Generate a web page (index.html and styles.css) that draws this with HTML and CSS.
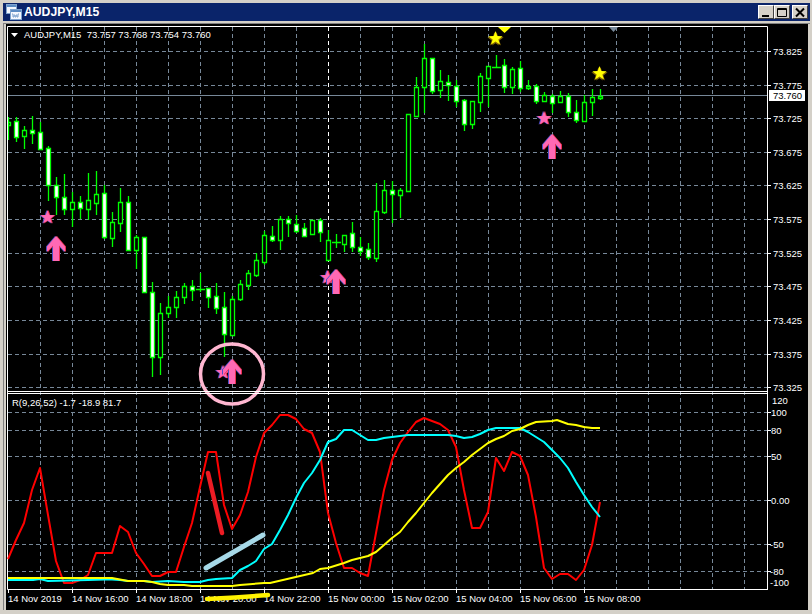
FILE: index.html
```html
<!DOCTYPE html>
<html lang="en">
<head>
<meta charset="utf-8">
<title>AUDJPY,M15</title>
<link rel="stylesheet" href="styles.css">
</head>
<body>
<div class="window">
  <header class="titlebar">
    <svg class="app-icon" width="16" height="16" viewBox="0 0 16 16">
      <rect class="win-back" x="0.5" y="0.5" width="10" height="9"/>
      <rect class="win-bar" x="1" y="1" width="9" height="2"/>
      <rect class="win-front" x="4.5" y="5.5" width="11" height="10"/>
      <rect class="win-bar" x="5" y="6" width="10" height="2"/>
      <path class="win-mark" d="M6 10h1v3h1v-2h1v2h1v-2h1v2h1v-3h1"/>
    </svg>
    <span class="title">AUDJPY,M15</span>
    <div class="buttons">
      <button class="btn" type="button" aria-label="Minimize"><svg width="14" height="11" viewBox="0 0 14 11"><rect class="glyph-fill" x="3" y="8" width="7" height="2"/></svg></button>
      <button class="btn" type="button" aria-label="Maximize"><svg width="14" height="11" viewBox="0 0 14 11"><path class="glyph-line" d="M2.5 1.5h9v8h-9zM2 2.5h10" /></svg></button>
      <button class="btn btn-close" type="button" aria-label="Close"><svg width="14" height="11" viewBox="0 0 14 11"><path class="glyph-x" d="M3 1.5l8 8M11 1.5l-8 8"/></svg></button>
    </div>
  </header>
  <main class="chart-frame">
    <svg class="chart" width="802" height="586" viewBox="6 24 802 586">
      <defs>
        <path id="star" d="M0-7.5L1.76-2.43L7.13-2.32L2.85.93L4.41 6.07L0 3L-4.41 6.07L-2.85.93L-7.13-2.32L-1.76-2.43Z"/>
        <path id="arrow" d="M0 0L9 10.5V16L3 9.5V25H-3V9.5L-9 16V10.5Z"/>
        <g id="pink-star"><use href="#star" class="edge-blue" x="-1"/><use href="#star" class="edge-red" x="1"/><use href="#star" class="pink"/></g>
        <g id="pink-arrow"><use href="#arrow" class="edge-blue" x="-1"/><use href="#arrow" class="edge-red" x="1"/><use href="#arrow" class="pink"/></g>
        <g id="gold-star"><use href="#star" class="edge-gold" x="-1" y="1"/><use href="#star" class="edge-gold" x="1" y="1"/><use href="#star" class="gold"/></g>
      </defs>

      <path class="grid" d="M8 51.5H767M8 85.5H767M8 118.5H767M8 152.5H767M8 185.5H767M8 219.5H767M8 253.5H767M8 286.5H767M8 320.5H767M8 354.5H767M8 387.5H767M8 412.5H767M8 430.5H767M8 456.5H767M8 500.5H767M8 544.5H767M8 571.5H767"/>
      <path class="grid" d="M40.5 27V589M72.5 27V589M104.5 27V589M136.5 27V589M168.5 27V589M200.5 27V589M232.5 27V589M264.5 27V589M296.5 27V589M360.5 27V589M392.5 27V589M424.5 27V589M456.5 27V589M488.5 27V589M520.5 27V589M552.5 27V589M584.5 27V589M616.5 27V589M648.5 27V589M680.5 27V589M712.5 27V589M744.5 27V589"/>
      <path class="separator" d="M328.5 27V589"/>
      <path class="bid" d="M8 95.5H767"/>

      <path class="wick" d="M8.5 117V140M16.5 117V142M24.5 126V149M32.5 116V144M40.5 122V149M48.5 146V201M56.5 177V215M64.5 174V215M72.5 192V227M80.5 196V219M88.5 173V220M96.5 171V215M104.5 185V239M112.5 212V247M120.5 188V232M128.5 196V250M136.5 235V269M152.5 282V377M160.5 303V375M168.5 296V318M176.5 291V318M184.5 283V304M192.5 280V301M200.5 273V292M208.5 288V308M216.5 283V314M224.5 292V357M232.5 296V335M240.5 280V301M248.5 270V290M256.5 253V277M264.5 231V265M272.5 226V242M280.5 216V250M288.5 216V237M296.5 215V233M304.5 223V236M320.5 218V242M328.5 230V260M336.5 234V248M344.5 235V252M352.5 222V252M360.5 237V256M368.5 243V260M376.5 183V262M384.5 180V214M392.5 181V223M400.5 188V218M416.5 77V116M424.5 44V113M432.5 58V94M440.5 70V98M448.5 75V101M456.5 80V107M464.5 99V131M472.5 101V129M480.5 73V112M488.5 66V107M496.5 55V68M504.5 59V93M512.5 67V94M520.5 61V92M528.5 80V90M536.5 84V104M544.5 92V101M552.5 94V113M560.5 91V102M568.5 93V117M576.5 100V123M584.5 95V121M592.5 89V116M600.5 89V100M196 289.5H205M332 242.5H341M492 67.5H501"/>
      <path class="body-open" d="M8.5 122.5v3h2v-3zM22.5 130.5v6h4v-6zM70.5 202.5v7h4v-7zM86.5 200.5v9h4v-9zM94.5 194.5v9h4v-9zM110.5 222.5v16h4v-16zM118.5 202.5v21h4v-21zM134.5 237.5v13h4v-13zM158.5 313.5v44h4v-44zM166.5 307.5v6h4v-6zM174.5 297.5v10h4v-10zM182.5 286.5v11h4v-11zM230.5 299.5v36h4v-36zM238.5 284.5v15h4v-15zM246.5 273.5v12h4v-12zM254.5 260.5v15h4v-15zM262.5 235.5v27h4v-27zM278.5 219.5v21h4v-21zM310.5 220.5v14h4v-14zM326.5 240.5v20h4v-20zM342.5 235.5v9h4v-9zM374.5 211.5v47h4v-47zM382.5 190.5v22h4v-22zM398.5 190.5v5h4v-5zM406.5 114.5v77h4v-77zM414.5 87.5v29h4v-29zM422.5 58.5v29h4v-29zM438.5 81.5v9h4v-9zM470.5 101.5v23h4v-23zM478.5 76.5v26h4v-26zM486.5 66.5v12h4v-12zM510.5 69.5v18h4v-18zM526.5 86.5v2h4v-2zM542.5 95.5v6h4v-6zM558.5 96.5v6h4v-6zM582.5 102.5v19h4v-19zM590.5 97.5v5h4v-5zM598.5 96.5v2h4v-2z"/>
      <path class="body-fill" d="M14.5 121.5v16h4v-16zM30.5 130.5v3h4v-3zM38.5 132.5v17h4v-17zM46.5 148.5v37h4v-37zM54.5 185.5v12h4v-12zM62.5 197.5v12h4v-12zM78.5 202.5v6h4v-6zM102.5 193.5v44h4v-44zM126.5 202.5v48h4v-48zM142.5 237.5v55h4v-55zM150.5 292.5v65h4v-65zM190.5 286.5v4h4v-4zM206.5 288.5v9h4v-9zM214.5 296.5v12h4v-12zM222.5 307.5v27h4v-27zM270.5 236.5v4h4v-4zM286.5 219.5v4h4v-4zM294.5 224.5v7h4v-7zM302.5 228.5v8h4v-8zM318.5 220.5v12h4v-12zM350.5 233.5v14h4v-14zM358.5 247.5v4h4v-4zM366.5 249.5v8h4v-8zM390.5 190.5v4h4v-4zM430.5 58.5v33h4v-33zM446.5 82.5v3h4v-3zM454.5 86.5v15h4v-15zM462.5 100.5v24h4v-24zM502.5 65.5v22h4v-22zM518.5 68.5v20h4v-20zM534.5 86.5v15h4v-15zM550.5 96.5v7h4v-7zM566.5 96.5v16h4v-16zM574.5 112.5v8h4v-8z"/>

      <path class="marker-gold" d="M498 27H511L504.5 33Z"/>
      <path class="marker-slate" d="M609 27H618L613.5 32Z"/>
      <use href="#gold-star" x="495.5" y="38.5"/>
      <use href="#gold-star" x="599.5" y="73.5"/>
      <use href="#pink-star" x="47.5" y="217.5"/>
      <use href="#pink-star" x="544" y="118.5"/>
      <use href="#pink-star" x="327.5" y="277.5"/>
      <use href="#pink-star" x="223" y="372.5"/>
      <use href="#pink-arrow" x="56" y="236"/>
      <use href="#pink-arrow" x="552" y="134"/>
      <use href="#pink-arrow" x="336" y="269"/>
      <use href="#pink-arrow" x="232" y="359"/>
      <ellipse class="ring" cx="232" cy="374" rx="31.5" ry="30"/>

      <path class="frame" d="M7.5 26.5H767.5V590M7.5 26.5V589.5H767.5M7.5 391.5H767.5M7.5 393.5H767.5"/>
      <path class="frame" d="M768 51.5h3M768 85.5h3M768 118.5h3M768 152.5h3M768 185.5h3M768 219.5h3M768 253.5h3M768 286.5h3M768 320.5h3M768 354.5h3M768 387.5h3M768 412.5h3M768 430.5h3M768 456.5h3M768 500.5h3M768 544.5h3M768 571.5h3M8.5 590v3M72.5 590v3M136.5 590v3M200.5 590v3M264.5 590v3M328.5 590v3M392.5 590v3M456.5 590v3M520.5 590v3M584.5 590v3"/>
      <path class="frame-arrow" d="M11 33H18L14.5 37Z"/>

      <polyline class="line line-red" points="8,559 16,540 24,523 32,490 40,468 48,515 56,561 64,583 72,583 80,580 88,575 96,553 104,553 112,553 120,526 128,532 136,553 144,564 152,576 160,576 168,572 176,572 184,547 192,523 200,487 208,452 216,452 224,505 232,529 240,515 248,492 256,457 264,433 272,425 280,415 288,415 296,419 304,429 312,433 320,452 328,513 336,543 344,568 352,568 360,573 368,576 376,533 384,490 392,460 400,443 408,432 416,422 424,418 432,421 440,424 448,430 456,447 464,490 472,528 480,528 488,512 496,458 504,471 512,452 520,456 528,475 536,517 544,568 552,579 560,574 568,574 576,580 584,570 592,545 600,502"/>
      <polyline class="line line-cyan" points="8,580 33,580 40,579 48,581 88,580 104,579.5 112,579.5 120,580 128,581 144,581 152,582 168,581 184,582 200,582 208,580 216,579 232,578 240,570 248,566 256,561 264,549 272,544 280,530 288,515 296,498 304,483 312,473 320,460 328,442 336,439 344,430 352,430 360,435 368,440 376,440 384,438 392,437 400,436 408,435 448,435 456,436 464,438 472,437 480,434 488,430 496,428 512,428 520,428 528,432 536,437 544,442 552,450 560,458 568,468 576,482 584,495 592,507 600,517"/>
      <polyline class="line line-yellow" points="8,578 112,578 120,579.5 128,581 144,581 152,582 160,584 168,585 184,585 192,586 232,586 240,585 264,583 270,583 313,573 320,569 328,568 344,563 352,560 360,558 368,556 376,552 384,545 392,538 400,532 408,522 416,513 424,503 432,493 440,484 448,475 456,468 464,462 472,455 480,449 488,443 496,439 504,436 512,431 520,429 528,425 536,422 552,421 557,420 568,424 576,425 584,427 592,428 600,428"/>

      <g class="axis">
        <text x="24" y="38">AUDJPY,M15  73.757 73.768 73.754 73.760</text>
        <text x="12" y="406">R(9,26,52) -1.7 -18.9 81.7</text>
        <text x="773" y="55">73.825</text>
        <text x="773" y="89">73.775</text>
        <text x="773" y="122">73.725</text>
        <text x="773" y="156">73.675</text>
        <text x="773" y="189">73.625</text>
        <text x="773" y="223">73.575</text>
        <text x="773" y="257">73.525</text>
        <text x="773" y="290">73.475</text>
        <text x="773" y="324">73.425</text>
        <text x="773" y="358">73.375</text>
        <text x="773" y="391">73.325</text>
        <text x="772" y="404">120</text>
        <text x="771" y="416">100</text>
        <text x="771" y="434">80</text>
        <text x="771" y="460">50</text>
        <text x="771" y="504">0.00</text>
        <text x="770" y="548">-50</text>
        <text x="770" y="575">-80</text>
        <text x="770" y="586">-100</text>
        <text x="8" y="602">14 Nov 2019</text>
        <text x="72" y="602">14 Nov 16:00</text>
        <text x="136" y="602">14 Nov 18:00</text>
        <text x="200" y="602">14 Nov 20:00</text>
        <text x="264" y="602">14 Nov 22:00</text>
        <text x="328" y="602">15 Nov 00:00</text>
        <text x="392" y="602">15 Nov 02:00</text>
        <text x="456" y="602">15 Nov 04:00</text>
        <text x="520" y="602">15 Nov 06:00</text>
        <text x="584" y="602">15 Nov 08:00</text>
      </g>
      <rect class="bid-tag" x="769" y="90" width="36" height="11"/>
      <text class="bid-text" x="773" y="99">73.760</text>

      <path class="stroke-red" d="M208 473L222 533"/>
      <path class="stroke-blue" d="M206 568L263 535"/>
      <path class="stroke-yellow" d="M207 599L235 597.5L268 595"/>
    </svg>
  </main>
</div>
</body>
</html>
```
FILE: styles.css
```css
* { box-sizing: border-box; }
html, body { margin: 0; padding: 0; background: #d4d0c8; }
.window {
  width: 812px;
  height: 614px;
  padding: 3px 2px 4px 3px;
  display: flex;
  flex-direction: column;
  background: #d4d0c8;
}
.titlebar {
  height: 18px;
  flex: none;
  display: flex;
  align-items: center;
  background: #0a246a;
  padding: 0 2px 0 3px;
  gap: 2px;
}
.app-icon { flex: none; }
.win-back, .win-front { fill: #f4f8ff; stroke: #7fa4cf; }
.win-bar { fill: #5b8cc4; }
.win-mark { fill: none; stroke: #7fa4cf; }
.title {
  font: bold 12.2px "Liberation Sans", Arial, sans-serif;
  color: #fff;
}
.buttons { margin-left: auto; display: flex; gap: 0; }
.btn {
  width: 16px;
  height: 14px;
  padding: 0;
  margin: 0;
  border: 1px solid;
  border-color: #fff #404040 #404040 #fff;
  background: #d4d0c8;
  display: flex;
  align-items: center;
  justify-content: center;
}
.btn-close { margin-left: 2px; }
.glyph-fill { fill: #000; }
.glyph-line { fill: none; stroke: #000; }
.glyph-x { fill: none; stroke: #000; stroke-width: 2; }

.chart-frame {
  flex: 1;
  margin: 2px 0 0 0;
  padding-left: 2px;
  min-height: 0;
  background: #d4d0c8;
  border-left: 1px solid #808080;
  border-top: 1px solid #808080;
}
.chart { display: block; background: #000; }

.grid { fill: none; stroke: #778899; stroke-width: 1; stroke-dasharray: 4 3; }
.separator { fill: none; stroke: #fff; stroke-width: 1; stroke-dasharray: 4 3; }
.bid { fill: none; stroke: #778899; stroke-width: 1; }
.wick { fill: none; stroke: #00ff00; stroke-width: 1.3; }
.body-open { fill: #000; stroke: #00ff00; stroke-width: 1.3; }
.body-fill { fill: #fff; stroke: #00ff00; stroke-width: 1.3; }
.frame { fill: none; stroke: #fff; stroke-width: 1; }
.frame-arrow { fill: #fff; }

.line { fill: none; stroke-width: 2; stroke-linejoin: round; }
.line-red { stroke: #ff0000; }
.line-cyan { stroke: #00ffff; }
.line-yellow { stroke: #ffff00; }

.pink { fill: #ff69b4; }
.gold { fill: #ffff00; }
.edge-blue { fill: #4a4fc4; }
.edge-red { fill: #e8304f; }
.edge-gold { fill: #8a6a00; }
.marker-gold { fill: #ffff00; }
.marker-slate { fill: #778899; }
.ring { fill: none; stroke: #ffb6d0; stroke-width: 3.5; }

.stroke-red { fill: none; stroke: #ed1c24; stroke-width: 4.5; stroke-linecap: round; }
.stroke-blue { fill: none; stroke: #a6d9e8; stroke-width: 5; stroke-linecap: round; }
.stroke-yellow { fill: none; stroke: #fff200; stroke-width: 4.5; stroke-linecap: round; }

.axis text, .bid-text {
  font: 9.5px "Liberation Sans", Arial, sans-serif;
  white-space: pre;
}
.axis text { fill: #fff; }
.bid-tag { fill: #fff; }
.bid-text { fill: #000; }
```
